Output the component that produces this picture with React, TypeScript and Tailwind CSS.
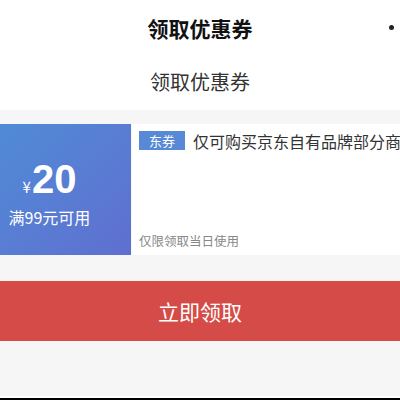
import React from 'react';

const font = { fontFamily: '"Noto Sans CJK SC", "Liberation Sans", sans-serif' };

export default function App() {
  return (
    <div className="w-[400px] h-[400px] flex flex-col bg-[#f6f6f6] overflow-hidden" style={font}>
      <div className="bg-white h-[110px] flex flex-col">
        <div className="h-[56px] flex items-center justify-center relative">
          <span className="text-[21px] font-bold text-[#111] leading-none">领取优惠券</span>
          <span className="absolute right-[6px] top-[25px] w-[5px] h-[5px] rounded-full bg-[#222]" />
        </div>
        <div className="flex-1 flex items-center justify-center pb-[2px]">
          <span className="text-[20px] text-[#333] leading-none">领取优惠券</span>
        </div>
      </div>

      <div className="mt-[14px] h-[131px] flex">
        <div className="w-[131px] bg-gradient-to-br from-[#4f8bd6] to-[#5f6fd0] flex flex-col items-center justify-center text-white pr-[32px]">
          <div className="flex items-end leading-none mt-[4px]">
            <span className="text-[15px] mb-[5px] mr-[1px]">¥</span>
            <span className="text-[40px] font-bold" style={{ fontFamily: '"Liberation Sans", sans-serif' }}>20</span>
          </div>
          <span className="text-[16px] mt-[10px] leading-none whitespace-nowrap">满99元可用</span>
        </div>
        <div className="flex-1 ml-[1px] bg-white flex flex-col justify-between pl-[7px] pt-[7px] pb-[8px] overflow-hidden">
          <div className="flex items-center whitespace-nowrap">
            <span className="bg-[#5889d6] text-white text-[13px] leading-none px-[10px] py-[3px]">东券</span>
            <span className="ml-[8px] text-[16px] text-[#333] leading-none">仅可购买京东自有品牌部分商品</span>
          </div>
          <span className="text-[12.5px] text-[#888] leading-none">仅限领取当日使用</span>
        </div>
      </div>

      <div className="mt-[26px] h-[60px] bg-[#d54b47] flex items-center justify-center">
        <span className="text-white text-[21px] leading-none">立即领取</span>
      </div>

      <div className="flex-1" />
      <div className="h-[2px] bg-white" />
      <div className="h-[2px] bg-black" />
    </div>
  );
}
